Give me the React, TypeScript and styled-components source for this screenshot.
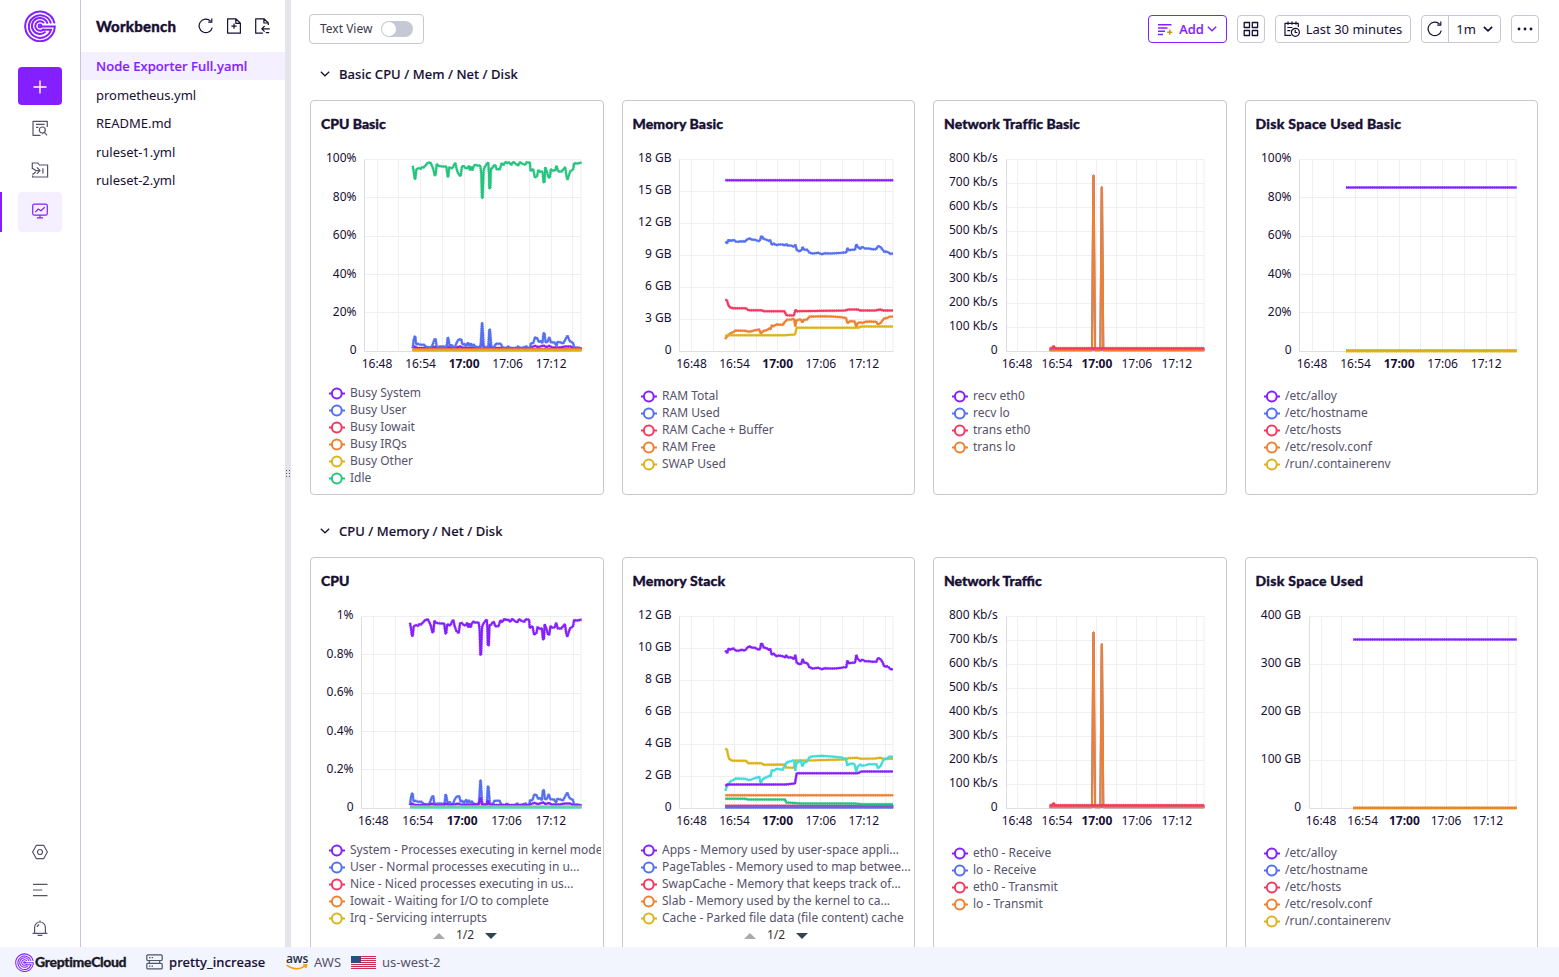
import React from 'react';
import styled, { createGlobalStyle } from 'styled-components';

const c = {
  purple: '#8420ff',
  blue: '#5470f0',
  red: '#f53860',
  orange: '#ef8030',
  gold: '#dcb318',
  green: '#24c47e',
  teal: '#42dcd8',
  ink: '#180f34',
  soft: '#56526a',
  line: '#c9c8d0',
  tint: '#f4f0ff',
};

const GlobalStyle = createGlobalStyle`
  * { box-sizing: border-box; }
  body { margin: 0; background: #fff; color: ${c.ink}; font: 13px/20px "Noto Sans", "Open Sans", sans-serif; overflow: hidden; }
  svg { display: block; flex: none; }
  button { font: inherit; color: inherit; background: none; border: 0; padding: 0; }
`;

const Shell = styled.div`
  height: 100vh;
  display: grid;
  grid-template-rows: minmax(0, 1fr) 30px;
`;
const Body = styled.div`
  display: flex;
  min-height: 0;
`;
const Rail = styled.nav`
  width: 81px;
  flex: none;
  border-right: 1px solid #c8c3d6;
  display: flex;
  flex-direction: column;
  align-items: center;
  padding-top: 10px;
`;
const CreateButton = styled.button`
  width: 44px;
  height: 38px;
  margin: 25px 0 2px;
  padding-top: 1px;
  border-radius: 4px;
  background: ${c.purple};
  display: grid;
  place-items: center;
`;
const RailItem = styled.button<{ $active?: boolean; $gap?: number }>`
  width: 80px;
  height: 40px;
  margin-top: ${p => p.$gap ?? 2}px;
  padding: 0 18px 0 ${p => (p.$active ? 16 : 18)}px;
  border-left: ${p => (p.$active ? `2px solid ${c.purple}` : '0')};
  color: ${p => (p.$active ? c.purple : c.soft)};
  > span {
    height: 100%;
    padding-bottom: ${p => (p.$active ? 2 : 0)}px;
    display: grid;
    place-items: center;
    border-radius: 4px;
    background: ${p => (p.$active ? c.tint : 'transparent')};
  }
`;
const RailFooter = styled.div`
  margin-top: auto;
  display: flex;
  flex-direction: column;
  gap: 22px;
  padding-bottom: 11px;
  color: ${c.soft};
`;
const Files = styled.aside`
  width: 204px;
  flex: none;
`;
const FilesHead = styled.div`
  height: 52px;
  padding: 0 15px;
  display: flex;
  align-items: center;
`;
const ToolIcons = styled.div`
  display: flex;
  gap: 12px;
  margin-left: auto;
`;
const Heading = styled.h2<{ $size?: number; $track?: number }>`
  margin: 0;
  font: 900 ${p => p.$size ?? 14}px/20px Lato, "Noto Sans", sans-serif;
  letter-spacing: ${p => p.$track ?? 0}px;
  -webkit-text-stroke: 0.35px currentColor;
  white-space: nowrap;
`;
const FileRow = styled.div<{ $active?: boolean }>`
  height: 28px;
  margin-bottom: 0.5px;
  padding: 4px 15px;
  font-weight: ${p => (p.$active ? 500 : 400)};
  letter-spacing: ${p => (p.$active ? 0.07 : -0.02)}px;
  color: ${p => (p.$active ? c.purple : c.ink)};
  -webkit-text-stroke: ${p => (p.$active ? '0.2px currentColor' : '0')};
  background: ${p => (p.$active ? c.tint : 'transparent')};
`;
const Splitter = styled.div`
  width: 6px;
  flex: none;
  background: #e4e4eb;
  display: grid;
  place-items: center;
`;
const Main = styled.main`
  flex: 1;
  min-width: 0;
  padding: 14px 20px 0 18px;
  overflow: hidden;
`;
const Toolbar = styled.div`
  height: 30px;
  display: flex;
  align-items: center;
  gap: 10px;
`;
const TextView = styled.label`
  height: 30px;
  width: 115px;
  margin-right: auto;
  padding: 0 10px;
  border: 1px solid ${c.line};
  border-radius: 4px;
  display: flex;
  align-items: center;
  justify-content: space-between;
  font-size: 12px;
  color: #3c3a4a;
`;
const Switch = styled.span`
  width: 32px;
  height: 16px;
  border-radius: 8px;
  background: #c6c9d3;
  padding: 1px;
  &::after {
    content: '';
    display: block;
    width: 14px;
    height: 14px;
    border-radius: 50%;
    background: #fff;
  }
`;
const ToolButton = styled.button<{ $w: number; $primary?: boolean }>`
  width: ${p => p.$w}px;
  height: 28px;
  border: 1px solid ${p => (p.$primary ? c.purple : c.line)};
  border-radius: 4px;
  color: ${p => (p.$primary ? c.purple : c.ink)};
  font-weight: ${p => (p.$primary ? 500 : 400)};
  -webkit-text-stroke: ${p => (p.$primary ? '0.15px currentColor' : '0')};
  display: flex;
  align-items: center;
  justify-content: center;
  gap: 6px;
  white-space: nowrap;
`;
const AddChevron = styled.span`
  margin-left: -3px;
`;
const Split = styled.div`
  display: flex;
  width: 80px;
  height: 28px;
  border: 1px solid ${c.line};
  border-radius: 4px;
`;
const SplitPart = styled.button<{ $w: number }>`
  width: ${p => p.$w}px;
  display: flex;
  align-items: center;
  justify-content: center;
  gap: 7px;
  & + & { border-left: 1px solid ${c.line}; }
`;
const SectionHead = styled.div<{ $gap: number }>`
  height: 20px;
  margin-top: ${p => p.$gap}px;
  padding-left: 10px;
  display: flex;
  align-items: center;
  gap: 8px;
  font-weight: 500;
  letter-spacing: 0.05px;
  -webkit-text-stroke: 0.15px currentColor;
`;
const ChevronBox = styled.span`
  width: 12px;
  display: grid;
  place-items: center;
`;
const Cards = styled.div`
  display: grid;
  grid-template-columns: 294px 293px 294px 293px;
  column-gap: 18px;
  margin: 16px 0 0 1px;
`;
const Card = styled.section`
  height: 395px;
  border: 1px solid ${c.line};
  border-radius: 4px;
  overflow: hidden;
`;
const CardTitle = styled.div`
  height: 39px;
  padding: 13px 9.5px 0;
  ${Card}:nth-child(odd) > & { padding-left: 10px; }
`;
const Legend = styled.ul<{ $tight?: boolean }>`
  list-style: none;
  margin: ${p => (p.$tight ? 8 : 11)}px 0 0 18px;
  padding: 0;
  color: ${c.soft};
  font-size: 12px;
`;
const LegendItem = styled.li`
  height: 17px;
  line-height: 17px;
  display: flex;
  gap: 5px;
  white-space: nowrap;
  overflow: hidden;
  margin-right: 2px;
`;
const Pager = styled.div<{ $x: number }>`
  display: flex;
  align-items: center;
  gap: 11px;
  height: 17px;
  padding-left: ${p => p.$x}px;
  font-size: 12px;
  color: #333;
  svg { margin-top: 3px; }
`;
const StatusBar = styled.footer`
  background: #f3f5fe;
  display: flex;
  align-items: center;
  padding-left: 15px;
  color: ${c.soft};
  white-space: nowrap;
`;
const Brand = styled.span`
  margin-left: 1px;
  width: 111px;
  color: #1d1a28;
  font: 900 14px/20px Lato, "Noto Sans", sans-serif;
  letter-spacing: -0.33px;
  -webkit-text-stroke: 0.3px currentColor;
`;
const ServerBox = styled.span`
  margin-left: 0;
`;
const Instance = styled.span`
  width: 117px;
  margin-left: 6px;
  color: ${c.ink};
  font-weight: 500;
  letter-spacing: 0.08px;
  -webkit-text-stroke: 0.15px currentColor;
`;
const AwsMark = styled.div`
  position: relative;
  width: 22px;
  height: 20px;
  font: 600 12px/13px "Open Sans", "Noto Sans", sans-serif;
  letter-spacing: -0.1px;
  color: #252f3e;
  svg { position: absolute; left: 0; top: 12px; }
`;
const Region = styled.span<{ $ml: number; $w: number }>`
  margin-left: ${p => p.$ml}px;
  width: ${p => p.$w}px;
`;

/* ---------- icons ---------- */

const Stroke = ({ size = 16, w = 1.2, children }: { size?: number; w?: number; children: React.ReactNode }) => (
  <svg width={size} height={size} viewBox="0 0 16 16" fill="none" stroke="currentColor" strokeWidth={w} strokeLinejoin="round">
    {children}
  </svg>
);

const Logo = ({ size, w = 2 }: { size: number; w?: number }) => (
  <svg width={size} height={size} viewBox="0 0 32 32" fill="none" stroke={c.purple} strokeWidth={w}>
    <path d="M30.5 13.4A14.8 14.8 0 1 0 30.8 16.6H16" />
    <path d="M27 13.4A11.3 11.3 0 1 0 27 19.8H18" />
    <path d="M23.6 13.6A8 8 0 1 0 21.6 21.6" />
    <path d="M20 13.2A4.8 4.8 0 1 0 20 18.8" />
    <circle cx="16" cy="16" r="1.4" />
  </svg>
);

const Refresh = () => (
  <Stroke>
    <path d="M14.3 9.6A6.7 6.7 0 1 1 12.6 3.2M13.8 .6v3.6h-3.6" />
  </Stroke>
);
const FilePlus = () => (
  <Stroke>
    <path d="M1.6 .8h8.2l4.6 4.5v9.9H1.6zM9.8 .8v4.5h4.6M8 5.6v5.2M5.4 8.2h5.2" />
  </Stroke>
);
const FileImport = () => (
  <Stroke>
    <path d="M14.3 7V5L10 .8H1.7v14.4h7.2M9.9 .8V5h4.3M15.8 10.8H7.8m2.8-2.8-2.8 2.8 2.8 2.8M11.8 14.6h3.4" />
  </Stroke>
);
const QueryIcon = () => (
  <Stroke>
    <path d="M15.3 7V1.3H1v14h7.5M4 4.3h8.6M4 7.4h2.5M11 13.7h-.8" />
    <circle cx="10.3" cy="10" r="3" />
    <path d="m12.4 12.3 2.6 3" />
  </Stroke>
);
const IngestIcon = () => (
  <svg width="18" height="16" viewBox="0 0 18 16" fill="none" stroke="currentColor" strokeWidth="1.2">
    <path d="M1.3 7V1h5.6l1.5 2h8.2v12h-15v-1.4M1.3 6.6c2.6 0 1.8 2 4.4 2H8.6M1.3 12.2c2.6 0 1.6-2 3.6-2M5.9 5.4l3.1 3.2-3.1 3.2M11.9 6.2v5.2" />
  </svg>
);
const DashIcon = () => (
  <Stroke>
    <rect x=".7" y="1.2" width="14.6" height="11" rx="1.6" />
    <path d="m3.3 9.2 3-3.2 2.6 1.8 3.8-3.6M8 12.2v2.4M4.9 14.8h6.2" />
  </Stroke>
);
const HexIcon = () => (
  <Stroke>
    <path d="M4.4 1.3h7.2L15.4 8l-3.8 6.7H4.4L.6 8z" />
    <circle cx="8" cy="8" r="2.5" />
  </Stroke>
);
const MenuIcon = () => (
  <Stroke>
    <path d="M1 2.3h14.5M1 8h9.3M1 13.7h14.5" />
  </Stroke>
);
const BellIcon = () => (
  <Stroke>
    <path d="M.6 13.4h14.8M2.6 13.2V7.4a5.4 5.4 0 0 1 10.8 0v5.8M5.6 15.4h4.8M8 2V.6M5.2 7a2.8 2.8 0 0 1 2-2.4" />
  </Stroke>
);
const Chevron = ({ w = 1.5 }: { w?: number }) => (
  <svg width="10" height="8" viewBox="0 0 10 8" fill="none" stroke="currentColor" strokeWidth={w}>
    <path d="m.8 1.8 4.2 4 4.2-4" />
  </svg>
);
const AddIcon = () => (
  <svg width="15" height="13" viewBox="0 0 15 13" fill="none" strokeWidth="1.5">
    <path d="M0 1.8h13.5M0 5h9.5M0 8.2h7M0 11.4h5" stroke={c.purple} />
    <path d="M11.7 6.6v5.2M9.1 9.2h5.2" stroke="#c89620" />
  </svg>
);
const GridIcon = () => (
  <Stroke w={1.3}>
    <path d="M1.2 1.5h5.3v5H1.2zM9.3 1.5h5.3v5H9.3zM1.2 9.5h5.3v5H1.2zM9.3 9.5h5.3v5H9.3z" />
  </Stroke>
);
const CalendarIcon = () => (
  <Stroke>
    <path d="M14.3 6V2.4H1v12h6.3M4 .4v3.4M8 .4v3.4M12 .4v3.4M3.3 6.5h5M3.3 9.6h3" />
    <circle cx="11.4" cy="11.3" r="4" />
    <path d="M11.2 8.8v2.7h2.2" />
  </Stroke>
);
const ServerIcon = () => (
  <svg width="17" height="16" viewBox="0 0 17 16" fill="none" stroke="#4b5468" strokeWidth="1.2">
    <rect x=".8" y=".9" width="15.4" height="5.6" rx="1" />
    <rect x=".8" y="9.3" width="15.4" height="5.6" rx="1" />
    <path d="M3 3.7h1.4M5.6 3.7H7M3 12.1h1.4M5.6 12.1H7M3.3 6.5v2.8M13.7 6.5v2.8" />
  </svg>
);
const FlagIcon = () => (
  <svg width="25" height="13" viewBox="0 0 25 13">
    <rect width="25" height="13" fill="#fff" />
    {[0, 2, 4, 6, 8, 10, 12].map(y => (
      <rect key={y} y={y} width="25" height="1.1" fill="#c8304e" />
    ))}
    <rect width="10" height="7" fill="#2f4d7e" />
  </svg>
);

/* ---------- chart data: samples are "x,y" in thirds of a pixel ---------- */

const IDLE =
  '338,498 341,515 344,537 346,537 349,508 356,505 362,507 366,502 372,502 378,495 384,489 391,488 396,498 400,508 404,526 407,526 410,492 415,498 422,499 430,500 439,500 443,530 445,530 448,502 455,506 459,502 462,495 466,489 470,508 475,522 482,529 486,500 491,498 497,505 503,505 507,498 510,512 514,500 517,512 521,500 525,494 530,497 536,497 541,498 544,520 546,594 548,594 551,510 555,500 561,492 565,488 567,520 568,565 571,565 573,505 577,505 581,498 586,495 590,508 600,508 605,490 610,496 617,486 622,490 628,488 634,495 640,486 647,492 655,497 660,487 668,492 676,495 680,487 690,489 692,513 700,508 705,534 712,528 715,510 720,516 728,515 731,547 734,547 736,502 741,515 746,533 750,533 753,508 758,512 766,512 770,498 775,515 785,515 796,502 800,530 803,540 806,530 811,515 820,508 823,490 835,491 840,489 845,489';
const USER =
  '338,205 341,180 344,170 346,170 348,193 354,192 362,195 372,195 378,201 390,203 396,200 400,188 404,178 407,178 410,202 420,200 432,200 440,202 443,173 445,175 449,200 455,195 460,202 466,200 470,188 476,179 484,178 487,194 493,192 498,199 504,188 508,199 512,190 516,199 521,193 525,200 535,202 542,200 546,130 547,130 551,195 553,202 560,202 565,205 568,149 570,149 574,200 582,202 588,192 603,192 607,202 615,206 625,200 632,206 645,206 655,200 662,206 670,203 680,200 685,206 690,206 693,190 700,190 705,173 712,175 717,187 722,183 728,190 731,160 734,160 737,188 743,186 748,172 753,187 764,188 770,198 773,186 783,188 790,191 796,180 803,167 809,183 820,190 823,203 835,203 845,206';
const SYSTEM =
  '338,205 344,200 350,204 395,205 404,200 411,205 438,205 443,200 449,204 470,203 480,200 490,204 541,204 546,182 551,204 565,204 568,191 573,204 690,205 697,201 706,198 715,202 731,197 740,202 748,198 757,203 780,203 796,200 812,200 820,205 845,206';
const flat = (y: number, x0 = 331, x1 = 835) => `${x0},${y} ${x1},${y}`;
const MEM_USED =
  '331,456 337,460 340,450 344,453 347,451 350,453 356,450 362,455 370,456 378,454 390,455 397,448 404,446 412,450 420,450 432,454 436,450 438,440 442,441 446,447 455,450 462,453 466,451 470,465 476,461 484,466 492,464 503,464 510,467 514,462 518,467 528,467 537,471 541,464 545,480 552,484 559,482 563,471 567,480 577,480 583,488 592,491 600,490 610,489 620,493 630,490 645,491 660,490 680,489 688,488 694,488 697,475 702,481 710,480 720,480 724,463 728,471 736,477 742,471 750,476 762,476 772,478 784,478 789,468 795,471 801,477 808,486 815,485 822,489 826,492 834,491';
const MEM_CACHE =
  '331,629 336,632 340,646 344,652 354,655 393,655 400,661 440,661 445,664 508,664 514,676 537,677 541,660 546,664 690,662 700,659 728,659 736,662 780,662 795,659 805,662 834,662';
const MEM_FREE =
  '331,748 334,742 340,736 347,730 355,727 362,722 390,723 403,726 420,721 433,719 437,731 441,727 446,723 455,721 463,716 467,718 470,707 476,709 484,704 503,705 510,696 516,690 528,689 537,687 541,710 544,692 551,690 557,688 562,698 567,690 576,689 583,681 590,680 600,680 620,679 650,680 680,682 686,684 693,684 697,700 705,694 718,694 724,711 728,700 736,697 742,700 750,696 762,695 784,696 789,704 796,700 804,690 808,685 815,685 823,681 834,680';
const MEM_SWAP = '331,739 337,736 510,736 540,734 545,714 730,714 738,710 834,710';
const STACK_APPS =
  '331,182 337,190 340,177 347,179 355,176 362,182 370,183 378,180 390,182 397,173 404,170 412,174 420,174 432,180 436,176 438,161 442,163 446,173 455,175 462,180 466,177 470,195 476,191 484,199 492,197 503,199 510,203 514,196 518,203 528,202 537,208 541,195 545,218 552,223 559,222 563,207 567,218 577,220 583,232 592,236 600,235 610,234 620,238 630,235 645,236 660,236 680,234 686,232 694,233 697,212 702,220 710,219 720,219 724,195 728,207 736,214 742,209 750,214 762,214 772,216 784,216 789,204 795,207 801,214 808,230 815,229 822,233 826,238 834,238';
const STACK_CACHE =
  '331,476 336,480 340,500 344,509 354,513 393,513 400,520 440,520 445,525 508,524 514,533 537,534 541,512 546,512 600,511 690,509 700,505 728,504 736,507 780,506 795,504 805,507 834,507';
const STACK_FREE =
  '331,603 334,594 340,583 347,574 355,571 362,566 390,567 403,571 420,565 433,561 437,580 441,572 446,566 455,562 463,558 467,560 470,540 476,543 484,537 503,540 510,526 516,517 528,514 537,511 541,543 544,522 551,515 557,512 562,530 567,518 576,516 583,503 590,500 620,498 650,500 680,503 686,506 693,506 697,528 705,521 718,522 724,546 728,530 736,524 742,528 750,526 762,523 784,523 789,535 796,530 804,513 808,507 815,508 823,500 834,501';
const STACK_SWAP = '331,588 337,584 510,584 540,581 545,550 730,550 738,545 834,545';
const STACK_BUFFERS = '331,627 390,627 400,629 510,629 514,638 560,641 720,641 740,643 834,643';
const NET_LO = '359,661 486,661 490,137 491,137 495,661 511,661 515,172 516,172 520,661 823,661';
const NET_ETH = '359,655 367,655 370,648 376,655 823,655';

type Series = { color: string; points: string; ox: number; oy: number; plain?: boolean };
type ChartSpec = {
  title: string;
  track?: number;
  left: number;
  right: number;
  first: number;
  step: number;
  labelGap?: number;
  labels: string[];
  series: Series[];
  legend: string[];
  tight?: boolean;
  pager?: number;
};

const PALETTE = [c.purple, c.blue, c.red, c.orange, c.gold, c.green];
const TIMES = ['16:48', '16:54', '17:00', '17:06', '17:12'];
const PLOT_TOP = 19.5;
const PLOT_HEIGHT = 192;

/* Maps samples to plot pixels; a from/to range stretches a shared series over the plot. */
const toPoints = (s: Series, from = 0, to = 0) =>
  s.points
    .split(' ')
    .map(p => {
      const [x, y] = p.split(',').map(Number);
      const px = from ? from + ((x - 338) * (to - from)) / 507 : s.ox + x / 3;
      return `${px.toFixed(2)},${(PLOT_TOP + (y - s.oy) / 3).toFixed(2)}`;
    })
    .join(' ');

const Chart = ({ spec, cpuFrom }: { spec: ChartSpec; cpuFrom?: number }) => {
  const rows = spec.labels.length - 1;
  const columns = Array.from({ length: 14 }, (_, i) => Math.floor(spec.first + (i * spec.step) / 2) + 0.5).filter(x => x < spec.right - 3);
  return (
    <svg width="292" height="236" fontFamily='"Noto Sans", sans-serif' fontSize="12" fill={c.ink}>
      {spec.labels.map((label, i) => {
        const offset = (PLOT_HEIGHT * i) / rows;
        const y = Math.floor(19.3 + offset) + 0.5;
        return (
          <g key={label}>
            <line x1={spec.left} x2={spec.right} y1={y} y2={y} stroke={i === rows ? '#dddde3' : '#efeff1'} />
            <text x={spec.left - (spec.labelGap ?? 8)} y={22 + Math.ceil(offset)} textAnchor="end">{label}</text>
          </g>
        );
      })}
      {[...columns, spec.right - 0.5].map(x => (
        <line key={x} x1={x} x2={x} y1={PLOT_TOP} y2={PLOT_TOP + PLOT_HEIGHT} stroke="#efeff1" />
      ))}
      <line x1={spec.left} x2={spec.left} y1={PLOT_TOP} y2={PLOT_TOP + PLOT_HEIGHT} stroke="#dddde3" />
      {TIMES.map((t, i) => (
        <text key={t} x={spec.first + i * spec.step} y="228" textAnchor="middle" fontWeight={i === 2 ? 700 : 400}>{t}</text>
      ))}
      {spec.series.map((s, i) => {
        const points = toPoints(s, cpuFrom, spec.right);
        return (
          <g key={i} fill="none" stroke={s.color} strokeLinejoin="bevel">
            <polyline points={points} strokeWidth="2" />
            {!s.plain && <polyline points={points} strokeWidth="3" strokeDasharray="1 0.85" opacity="0.65" />}
          </g>
        );
      })}
    </svg>
  );
};

const Panel = ({ spec, cpuFrom }: { spec: ChartSpec; cpuFrom?: number }) => (
  <Card>
    <CardTitle>
      <Heading $track={spec.track}>{spec.title}</Heading>
    </CardTitle>
    <Chart spec={spec} cpuFrom={cpuFrom} />
    <Legend $tight={spec.tight}>
      {spec.legend.map((name, i) => (
        <LegendItem key={name}>
          <svg width="16" height="17" viewBox="0 0 16 17" fill="#fff" stroke={PALETTE[i]} strokeWidth="2">
            <path d="M0 9.5h16" />
            <circle cx="7.8" cy="9.5" r="4.9" />
          </svg>
          {name}
        </LegendItem>
      ))}
    </Legend>
    {spec.pager && (
      <Pager $x={spec.pager}>
        <svg width="12" height="6"><path d="M0 6 6 0l6 6z" fill="#aaa" /></svg>
        1/2
        <svg width="12" height="6"><path d="M0 0h12L6 6z" fill="#2f4554" /></svg>
      </Pager>
    )}
  </Card>
);

const pct = (scale: string[]) => scale.map(v => `${v}%`).concat('0');
const kbs = [800, 700, 600, 500, 400, 300, 200, 100].map(v => `${v} Kb/s`).concat('0');
const gbs = (values: number[]) => values.map(v => `${v} GB`).concat('0');

const mem = (color: string, points: string): Series => ({ color, points, ox: -8, oy: 209 });
const stack = (color: string, points: string): Series => ({ color, points, ox: -8, oy: 80 });
const net = (color: string, points: string, plain = false): Series => ({ color, points, ox: -4, oy: 89, plain });
const load = (color: string, points: string): Series => ({ color, points, ox: -11, oy: -361 });

const network = [
  net(c.purple, flat(659, 359, 823)),
  net(c.blue, NET_LO, true),
  net(c.orange, NET_LO, true),
  net(c.red, NET_ETH),
];

const basicCpu: ChartSpec = {
  title: 'CPU Basic', left: 53.5, right: 270.5, first: 66, step: 43.55,
  labels: pct(['100', '80', '60', '40', '20']),
  series: [
    load(c.purple, SYSTEM), load(c.blue, USER), load(c.red, flat(208, 338, 845)), load(c.orange, flat(209, 338, 845)),
    load(c.gold, flat(212, 338, 845)), { color: c.green, points: IDLE, ox: -11, oy: 479 },
  ],
  legend: ['Busy System', 'Busy User', 'Busy Iowait', 'Busy IRQs', 'Busy Other', 'Idle'],
  tight: true,
};
const basic: ChartSpec[] = [
  {
    title: 'Memory Basic', track: 0.12, left: 56.5, right: 270.5, first: 68.5, step: 43.1,
    labels: gbs([18, 15, 12, 9, 6, 3]),
    series: [mem(c.purple, flat(271)), mem(c.blue, MEM_USED), mem(c.red, MEM_CACHE), mem(c.orange, MEM_FREE), mem(c.gold, MEM_SWAP)],
    legend: ['RAM Total', 'RAM Used', 'RAM Cache + Buffer', 'RAM Free', 'SWAP Used'],
  },
  {
    title: 'Network Traffic Basic', track: 0.06, left: 72.5, right: 270.5, first: 83, step: 39.95, labelGap: 8.8,
    labels: kbs, series: network,
    legend: ['recv eth0', 'recv lo', 'trans eth0', 'trans lo'],
  },
  {
    title: 'Disk Space Used Basic', track: 0.29, left: 53.5, right: 270.5, first: 66, step: 43.55,
    labels: pct(['100', '80', '60', '40', '20']),
    series: [
      { color: c.purple, points: flat(84, 300, 812), ox: 0, oy: 0 },
      { color: c.orange, points: flat(573, 300, 812), ox: 0, oy: 0 },
      { color: c.gold, points: flat(575, 300, 812), ox: 0, oy: 0 },
    ],
    legend: ['/etc/alloy', '/etc/hostname', '/etc/hosts', '/etc/resolv.conf', '/run/.containerenv'],
  },
];

const fullCpu: ChartSpec = {
  title: 'CPU', left: 50.5, right: 270.5, first: 62.3, step: 44.4,
  labels: pct(['1', '0.8', '0.6', '0.4', '0.2']),
  series: [
    { color: c.purple, points: IDLE, ox: 0, oy: 479 }, load(c.blue, USER), load(c.purple, SYSTEM),
    load(c.gold, flat(209, 338, 845)), load(c.teal, flat(212, 338, 845)),
  ],
  legend: [
    'System - Processes executing in kernel mode', 'User - Normal processes executing in u...',
    'Nice - Niced processes executing in us...', 'Iowait - Waiting for I/O to complete', 'Irq - Servicing interrupts',
  ],
  tight: true,
  pager: 122,
};
const full: ChartSpec[] = [
  {
    title: 'Memory Stack', track: 0.2, left: 56.5, right: 270.5, first: 68.5, step: 43.1,
    labels: gbs([12, 10, 8, 6, 4, 2]),
    series: [
      stack(c.purple, STACK_APPS), stack(c.purple, flat(650)), stack(c.red, flat(648)), stack(c.blue, flat(653)),
      stack(c.orange, flat(616)), stack(c.gold, STACK_CACHE), stack(c.green, STACK_BUFFERS),
      stack(c.teal, STACK_FREE), stack(c.purple, STACK_SWAP),
    ],
    legend: [
      'Apps - Memory used by user-space appli...', 'PageTables - Memory used to map betwee...',
      'SwapCache - Memory that keeps track of...', 'Slab - Memory used by the kernel to ca...',
      'Cache - Parked file data (file content) cache',
    ],
    tight: true,
    pager: 121,
  },
  {
    title: 'Network Traffic', left: 72.5, right: 270.5, first: 83, step: 39.95, labelGap: 8.8,
    labels: kbs, series: network,
    legend: ['eth0 - Receive', 'lo - Receive', 'eth0 - Transmit', 'lo - Transmit'],
  },
  {
    title: 'Disk Space Used', track: 0.3, left: 63.5, right: 270.5, first: 75, step: 41.7, labelGap: 8.4,
    labels: gbs([400, 300, 200, 100]),
    series: [
      { color: c.purple, points: flat(69, 322, 812), ox: 0, oy: 0 },
      { color: c.gold, points: flat(575, 322, 812), ox: 0, oy: 0 },
      { color: c.orange, points: flat(574, 322, 812), ox: 0, oy: 0 },
    ],
    legend: ['/etc/alloy', '/etc/hostname', '/etc/hosts', '/etc/resolv.conf', '/run/.containerenv'],
  },
];

const files = ['Node Exporter Full.yaml', 'prometheus.yml', 'README.md', 'ruleset-1.yml', 'ruleset-2.yml'];

export default function App() {
  return (
    <Shell>
      <GlobalStyle />
      <Body>
        <Rail>
          <Logo size={32} />
          <CreateButton>
            <svg width="14" height="14" stroke="#fff" strokeWidth="1.4"><path d="M7 .5v13M.5 7h13" /></svg>
          </CreateButton>
          <RailItem $gap={1}><span><QueryIcon /></span></RailItem>
          <RailItem><span><IngestIcon /></span></RailItem>
          <RailItem $active><span><DashIcon /></span></RailItem>
          <RailFooter>
            <HexIcon />
            <MenuIcon />
            <BellIcon />
          </RailFooter>
        </Rail>
        <Files>
          <FilesHead>
            <Heading $size={15} $track={0.2}>Workbench</Heading>
            <ToolIcons>
              <Refresh />
              <FilePlus />
              <FileImport />
            </ToolIcons>
          </FilesHead>
          {files.map((f, i) => (
            <FileRow key={f} $active={i === 0}>{f}</FileRow>
          ))}
        </Files>
        <Splitter>
          <svg width="6" height="10" fill="#4a4a58">
            {[1, 4, 7].map(y => (
              <g key={y}><rect x="1" y={y} width="1" height="1" /><rect x="4" y={y} width="1" height="1" /></g>
            ))}
          </svg>
        </Splitter>
        <Main>
          <Toolbar>
            <TextView>Text View<Switch /></TextView>
            <ToolButton $w={79} $primary><AddIcon />Add<AddChevron><Chevron /></AddChevron></ToolButton>
            <ToolButton $w={28}><GridIcon /></ToolButton>
            <ToolButton $w={136}><CalendarIcon />Last 30 minutes</ToolButton>
            <Split>
              <SplitPart $w={26}><Refresh /></SplitPart>
              <SplitPart $w={52}>1m<Chevron w={1.7} /></SplitPart>
            </Split>
            <ToolButton $w={28}>
              <svg width="16" height="4" fill="currentColor"><circle cx="2" cy="2" r="1.4" /><circle cx="8" cy="2" r="1.4" /><circle cx="14" cy="2" r="1.4" /></svg>
            </ToolButton>
          </Toolbar>
          <SectionHead $gap={20}><ChevronBox><Chevron w={1.2} /></ChevronBox>Basic CPU / Mem / Net / Disk</SectionHead>
          <Cards>
            <Panel spec={basicCpu} cpuFrom={101.7} />
            {basic.map(s => <Panel key={s.title} spec={s} />)}
          </Cards>
          <SectionHead $gap={26}><ChevronBox><Chevron w={1.2} /></ChevronBox>CPU / Memory / Net / Disk</SectionHead>
          <Cards>
            <Panel spec={fullCpu} cpuFrom={99} />
            {full.map(s => <Panel key={s.title} spec={s} />)}
          </Cards>
        </Main>
      </Body>
      <StatusBar>
        <Logo size={19} w={1.7} />
        <Brand>GreptimeCloud</Brand>
        <ServerBox><ServerIcon /></ServerBox>
        <Instance>pretty_increase</Instance>
        <AwsMark>
          aws
          <svg width="22" height="6" fill="none" stroke="#f90" strokeWidth="1.5"><path d="M.5 1c6 4.6 13 4.6 18.5 1.2M17 1l3.6-.2-.8 3.4" /></svg>
        </AwsMark>
        <Region $ml={6} $w={37}>AWS</Region>
        <FlagIcon />
        <Region $ml={6} $w={70}>us-west-2</Region>
      </StatusBar>
    </Shell>
  );
}
